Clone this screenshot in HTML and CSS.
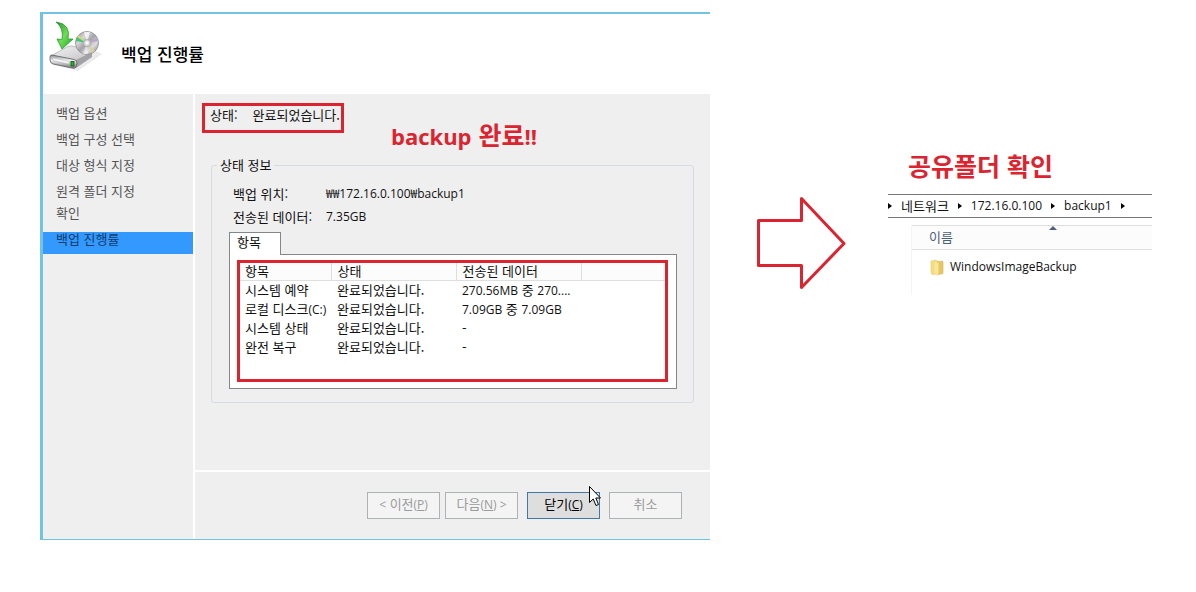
FILE: index.html
```html
<!DOCTYPE html>
<html lang="ko">
<head>
<meta charset="utf-8">
<title>백업 진행률</title>
<link rel="stylesheet" href="styles.css">
</head>
<body>
<main class="board">
  <section class="dialog">
    <header class="dialog-header">
      <svg class="backup-icon" viewBox="0 0 56 52" width="56" height="52" aria-hidden="true">
        <defs>
          <linearGradient id="arrow" x1="0" y1="0" x2="1" y2="1"><stop offset="0" stop-color="#1f9a2a"/><stop offset=".5" stop-color="#6fdc55"/><stop offset="1" stop-color="#24a52b"/></linearGradient>
          <linearGradient id="disc" x1="0" y1="0" x2="1" y2="1"><stop offset="0" stop-color="#8d8d91"/><stop offset=".3" stop-color="#d8d8da"/><stop offset=".5" stop-color="#a3a3a8"/><stop offset=".7" stop-color="#dededf"/><stop offset="1" stop-color="#77777b"/></linearGradient>
          <linearGradient id="top" x1="0" y1="0" x2="1" y2="1"><stop offset="0" stop-color="#f4f4f4"/><stop offset="1" stop-color="#c2c2c5"/></linearGradient>
          <linearGradient id="front" x1="0" y1="0" x2="0" y2="1"><stop offset="0" stop-color="#8d8d92"/><stop offset=".4" stop-color="#f0f0f1"/><stop offset="1" stop-color="#77777b"/></linearGradient>
        </defs>
        <path d="M6 45 L30 51 L54 34 L46 30Z" fill="#eaeaec"/>
        <path d="M3 36 L19 27 Q21 26 24 26 L43 31 Q45 32 43 34 L28 41Z" fill="url(#top)" stroke="#a5a5a8" stroke-width=".7"/>
        <path d="M28 40 L44 32 L44 37 L28 48Z" fill="#a2a2a6"/>
        <path d="M4 35 L26 39.500 Q29 40 29 43 L28 47 Q27 49 24 48 L5 44 Q2 43 2 40 V37 Q2 35 4 35Z" fill="url(#front)" stroke="#5d5d62" stroke-width=".8"/>
        <path d="M5 38 L21 41.500 V44 L5 40.500Z" fill="#f7f7f7" stroke="#aaa" stroke-width=".4"/>
        <rect x="23" y="41.500" width="3" height="4.500" fill="#20b62c" stroke="#174f1b" stroke-width=".8"/>
        <circle cx="39" cy="23" r="11.500" fill="url(#disc)" stroke="#8c8c90" stroke-width=".8"/>
        <path d="M39 23 L28 21 Q28 19 29 17Z" fill="#3cc878"/>
        <path d="M39 23 L29 17 L31 15Z" fill="#d9d07a"/>
        <path d="M39 23 L49 18 L50 21Z" fill="#b9a3cc"/>
        <path d="M39 23 L47 31 L44 33Z" fill="#d8cf9b"/>
        <path d="M39 23 L36 12 L42 12Z" fill="#fff" opacity=".7"/>
        <path d="M39 23 L35 34 L40 34Z" fill="#fff" opacity=".5"/>
        <circle cx="39" cy="23" r="3.500" fill="#dcdce0" stroke="#a2a2a7" stroke-width=".8"/>
        <circle cx="39" cy="23" r="1.500" fill="#fff"/>
        <path d="M8 2 Q23 4 20 19 L25 19 L14 29 L9 19 L14 19.500 Q16 8 8 2Z" fill="url(#arrow)" stroke="#2b9a32" stroke-width=".8" stroke-linejoin="round"/>
      </svg>
      <h1 class="dialog-title">백업 진행률</h1>
    </header>
    <div class="dialog-body">
      <nav class="steps">
        <ol class="step-list">
          <li class="step">백업 옵션</li>
          <li class="step">백업 구성 선택</li>
          <li class="step">대상 형식 지정</li>
          <li class="step step-tight">원격 폴더 지정</li>
          <li class="step">확인</li>
          <li class="step step-current" aria-current="step">백업 진행률</li>
        </ol>
      </nav>
      <div class="content">
        <div class="progress">
          <div class="status-row">
            <p class="status"><span>상태:</span><span>완료되었습니다.</span></p>
            <strong class="callout"><span class="callout-latin">backup</span> 완료<span class="callout-latin">!!</span></strong>
          </div>
          <fieldset class="info">
            <legend class="info-legend">상태 정보</legend>
            <dl class="facts">
              <dt>백업 위치:</dt><dd>₩₩172.16.0.100₩backup1</dd>
              <dt>전송된 데이터:</dt><dd>7.35GB</dd>
            </dl>
            <div class="tabs" role="tablist"><button class="tab" type="button" role="tab" aria-selected="true">항목</button></div>
            <div class="tab-panel" role="tabpanel">
              <div class="table-frame">
                <table class="items">
                  <colgroup><col class="col-item"><col class="col-state"><col class="col-data"><col></colgroup>
                  <thead><tr><th>항목</th><th>상태</th><th>전송된 데이터</th><th></th></tr></thead>
                  <tbody>
                    <tr><td>시스템 예약</td><td>완료되었습니다.</td><td><span class="latin">270.56MB</span> 중 <span class="latin">270....</span></td><td></td></tr>
                    <tr><td>로컬 디스크<span class="latin">(C:)</span></td><td>완료되었습니다.</td><td><span class="latin">7.09GB</span> 중 <span class="latin">7.09GB</span></td><td></td></tr>
                    <tr><td>시스템 상태</td><td>완료되었습니다.</td><td>-</td><td></td></tr>
                    <tr><td>완전 복구</td><td>완료되었습니다.</td><td>-</td><td></td></tr>
                  </tbody>
                </table>
              </div>
            </div>
          </fieldset>
        </div>
        <footer class="actions">
          <div class="pager">
            <button class="button" type="button" disabled><span class="latin">&lt;</span> 이전<span class="latin">(<u>P</u>)</span></button>
            <button class="button" type="button" disabled>다음<span class="latin">(<u>N</u>) &gt;</span></button>
          </div>
          <div class="close-wrap">
            <button class="button button-default" type="button">닫기<span class="latin">(<u>C</u>)</span></button>
            <svg class="cursor" viewBox="0 0 12 21" width="12" height="21" aria-hidden="true"><path d="M.5.5 V16.500 L4.200 13 L7 19.500 L9.500 18.500 L6.800 12 H11.500Z" fill="#fff" stroke="#000"/></svg>
          </div>
          <button class="button" type="button" disabled>취소</button>
        </footer>
      </div>
    </div>
  </section>

  <svg class="arrow" viewBox="0 0 90 96" width="90" height="96" aria-hidden="true"><path d="M2.500 25.500 H45.500 V3.500 L88 48.500 L45.500 92.500 V70.500 H2.500Z" fill="#fff" stroke="#dc2430" stroke-width="3" stroke-linejoin="round"/></svg>

  <section class="explorer">
    <h2 class="callout explorer-title">공유폴더 확인</h2>
    <nav class="address">
      <i class="chevron"></i><a href="#network" class="crumb crumb-ko">네트워크</a>
      <i class="chevron"></i><a href="#host" class="crumb">172.16.0.100</a>
      <i class="chevron"></i><a href="#backup1" class="crumb">backup1</a>
      <i class="chevron"></i>
    </nav>
    <div class="files">
      <div class="files-header"><span>이름</span><i class="sort"></i></div>
      <div class="file">
        <svg class="folder" viewBox="0 0 14 17" width="14" height="17" aria-hidden="true">
          <path d="M1 2 L6 1 L8 2.500 V15 L2 15.500 L1 14Z" fill="#f4df86" stroke="#e4c96c" stroke-width=".6"/>
          <path d="M7 3 L12.500 2 L13 3 V14.500 L7 16Z" fill="#e6c862" stroke="#d6b450" stroke-width=".6"/>
          <path d="M5 3 L8.500 4 V16 L5 15Z" fill="#f8e69a"/>
        </svg>
        <span class="latin">WindowsImageBackup</span>
      </div>
    </div>
  </section>
</main>
</body>
</html>
```
FILE: styles.css
```css
* { box-sizing: border-box; }

body {
  margin: 0;
  background: #fff;
  color: #111;
  font: 13px/18px "Noto Sans CJK KR", sans-serif;
}

h1, h2, p, dl, dd, ol { margin: 0; padding: 0; }

.latin, .facts dd, .crumb { font-family: "Open Sans", "Noto Sans CJK KR", sans-serif; font-size: 12px; }

.board {
  display: flex;
  align-items: flex-start;
  padding: 12px 44px 52px 40px;
}

/* Backup wizard */
.dialog {
  flex: 667 1 0;
  min-width: 0;
  border: solid #72c2e3;
  border-width: 2px 0 1px 3px;
}

.dialog-header {
  display: flex;
  gap: 17px;
  height: 80px;
  padding: 6px 0 0 5px;
}

.backup-icon { flex: none; }

.dialog-title {
  padding-top: 22px;
  font-size: 17px;
  line-height: 24px;
  font-weight: 500;
  color: #000;
}

.dialog-body {
  display: grid;
  grid-template-columns: 150px minmax(0, 1fr);
  gap: 2px;
}

.steps { padding-top: 12px; background: #efefef; }

.step-list { list-style: none; }

.step {
  margin-bottom: 4px;
  padding: 0 13px 8px;
  line-height: 14px;
  color: #555;
}

.step-tight { margin-bottom: 0; }

.step-current { background: #3399ff; color: #123c6c; }

.content { display: flex; flex-direction: column; gap: 2px; }

.progress { padding: 9px 16px 67px; background: #efefef; }

.status-row {
  display: flex;
  align-items: flex-start;
  gap: 47px;
  margin-left: -9px;
}

.status {
  display: flex;
  gap: 15px;
  width: 142px;
  padding: 0 0 6px 5px;
  border: 3px solid #dc2430;
  white-space: nowrap;
}

.callout {
  color: #dc2430;
  font-size: 25px;
  line-height: 30px;
  font-weight: 700;
}

.status-row .callout { margin-top: 16px; }

.callout-latin { font-family: "Open Sans", sans-serif; font-size: 22px; }

.info {
  min-width: 0;
  margin: 5px 0 0;
  padding: 8px 16px 13px 17px;
  border: 1px solid #d5dbe2;
  border-radius: 3px;
}

.info-legend { margin-left: -12px; padding: 0 3px; }

.facts {
  display: grid;
  grid-template-columns: 93px 1fr;
  padding-left: 4px;
  line-height: 23px;
}

.tabs { display: flex; margin-top: 4px; }

.tab {
  position: relative;
  width: 52px;
  height: 23px;
  margin-bottom: -1px;
  padding: 0 0 4px 7px;
  border: 1px solid #83878c;
  border-bottom: 0;
  background: #fff;
  color: inherit;
  font: inherit;
  text-align: left;
}

.tab-panel {
  padding: 5px 8px 6px 7px;
  border: 1px solid #83878c;
  background: #fff;
}

.table-frame { padding-bottom: 22px; border: 3px solid #dc2430; }

.items {
  width: 100%;
  table-layout: fixed;
  border-collapse: collapse;
}

.col-item { width: 91px; }
.col-state { width: 125px; }
.col-data { width: 125px; }

.items th,
.items td {
  height: 19px;
  padding: 0 0 0 6px;
  line-height: 18px;
  font-weight: 400;
  text-align: left;
  white-space: nowrap;
}

.items th:first-child,
.items td:first-child { padding-left: 5px; }

.items th {
  height: 17px;
  line-height: 16px;
  border: solid #dedede;
  border-width: 0 1px 1px 0;
  background: #fcfcfc;
}

.items th:last-child { border-right: 0; }

.actions {
  display: flex;
  justify-content: flex-end;
  gap: 9px;
  padding: 20px 28px;
  background: #efefef;
}

.pager { display: flex; gap: 5px; }

.button {
  display: block;
  width: 73px;
  height: 27px;
  padding: 0 0 2px;
  border: 1px solid #adb2b5;
  background: #f4f4f4;
  color: #9b9b9b;
  font: inherit;
  white-space: nowrap;
}

.button-default { border-color: #4079a8; background: #dedede; color: #000; }

.close-wrap { position: relative; }

.cursor { position: absolute; top: -6px; right: -1px; }

.arrow { flex: none; margin: 183px 42px 0 46px; }

/* Shared folder window */
.explorer { flex: 264 1 0; min-width: 0; padding-top: 138px; }

.explorer-title { padding-left: 20px; }

.address {
  display: flex;
  align-items: center;
  gap: 9px;
  height: 24px;
  margin-top: 14px;
  border: solid #777;
  border-width: 1px 0;
}

.crumb { color: #111; text-decoration: none; }
.crumb-ko { font-family: "Noto Sans CJK KR", sans-serif; font-size: 13px; }

.chevron {
  border: solid transparent;
  border-width: 3px 0 3px 4px;
  border-left-color: #000;
}

.files {
  min-height: 70px;
  margin: 7px 0 0 23px;
  border-left: 1px solid #f4f4f4;
}

.files-header {
  position: relative;
  height: 25px;
  padding: 2px 17px;
  border: solid #dfdfdf;
  border-width: 1px 0;
  background: #fcfcfc;
  color: #4c607a;
}

.sort {
  position: absolute;
  top: 0;
  left: 57%;
  border: solid transparent;
  border-width: 0 4px 4px;
  border-bottom-color: #4c607a;
}

.file {
  display: flex;
  align-items: center;
  gap: 6px;
  padding: 8px 18px;
}
```
